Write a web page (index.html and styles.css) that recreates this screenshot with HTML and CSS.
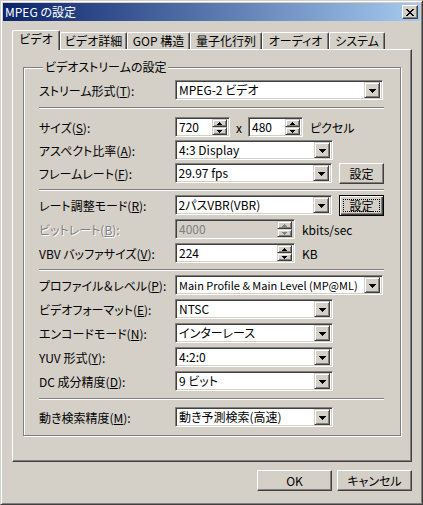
FILE: index.html
```html
<!DOCTYPE html>
<html lang="ja">
<head>
    <meta charset="UTF-8">
    <title>MPEG の設定</title>
    <link rel="stylesheet" href="styles.css">
</head>
<body>
    <svg class="defs" width="0" height="0">
        <symbol id="tri-down" viewBox="0 0 7 4"><path d="M0 0h7v1H0zM1 1h5v1H1zM2 2h3v1H2zM3 3h1v1H3z"/></symbol>
        <symbol id="tri-up-s" viewBox="0 0 5 3"><path d="M2 0h1v1H2zM1 1h3v1H1zM0 2h5v1H0z"/></symbol>
        <symbol id="tri-down-s" viewBox="0 0 5 3"><path d="M0 0h5v1H0zM1 1h3v1H1zM2 2h1v1H2z"/></symbol>
    </svg>

    <div class="window">
        <div class="titlebar">
            <span class="title">MPEG の設定</span>
            <span class="close-btn">
                <svg width="8" height="7" viewBox="0 0 8 7"><path d="M0 0h2v1H0zM6 0h2v1H6zM1 1h2v1H1zM5 1h2v1H5zM2 2h4v1H2zM3 3h2v1H3zM2 4h4v1H2zM1 5h2v1H1zM5 5h2v1H5zM0 6h2v1H0zM6 6h2v1H6z"/></svg>
            </span>
        </div>

        <div class="content">
            <div class="tabs">
                <div class="tab active" style="width:48px">ビデオ</div>
                <div class="tab" style="width:67px">ビデオ詳細</div>
                <div class="tab" style="width:63px">GOP 構造</div>
                <div class="tab" style="width:72px">量子化行列</div>
                <div class="tab" style="width:67px">オーディオ</div>
                <div class="tab" style="width:56px">システム</div>
            </div>

            <div class="panel">
                <fieldset class="group">
                    <legend>ビデオストリームの設定</legend>

                    <div class="section">
                        <div class="row">
                            <span class="label">ストリーム形式(<u>T</u>):</span>
                            <div class="combo wide"><span class="value">MPEG-2 ビデオ</span><span class="drop"><svg width="7" height="4"><use href="#tri-down"/></svg></span></div>
                        </div>
                    </div>

                    <div class="sep first"></div>

                    <div class="section tight">
                        <div class="row">
                            <span class="label">サイズ(<u>S</u>):</span>
                            <div class="edit size"><span class="value">720</span><span class="spin"><span class="half"><svg width="5" height="3"><use href="#tri-up-s"/></svg></span><span class="half"><svg width="5" height="3"><use href="#tri-down-s"/></svg></span></span></div>
                            <span class="times">x</span>
                            <div class="edit size"><span class="value">480</span><span class="spin"><span class="half"><svg width="5" height="3"><use href="#tri-up-s"/></svg></span><span class="half"><svg width="5" height="3"><use href="#tri-down-s"/></svg></span></span></div>
                            <span class="unit">ピクセル</span>
                        </div>
                        <div class="row">
                            <span class="label">アスペクト比率(<u>A</u>):</span>
                            <div class="combo"><span class="value">4:3 Display</span><span class="drop"><svg width="7" height="4"><use href="#tri-down"/></svg></span></div>
                        </div>
                        <div class="row">
                            <span class="label">フレームレート(<u>F</u>):</span>
                            <div class="combo"><span class="value">29.97 fps</span><span class="drop"><svg width="7" height="4"><use href="#tri-down"/></svg></span></div>
                            <button class="btn small">設定</button>
                        </div>
                    </div>

                    <div class="sep"></div>

                    <div class="section">
                        <div class="row">
                            <span class="label">レート調整モード(<u>R</u>):</span>
                            <div class="combo"><span class="value">2パスVBR(VBR)</span><span class="drop"><svg width="7" height="4"><use href="#tri-down"/></svg></span></div>
                            <button class="btn small focused"><span class="focus-rect">設定</span></button>
                        </div>
                        <div class="row">
                            <span class="label disabled">ビットレート(<u>B</u>):</span>
                            <div class="edit long disabled"><span class="value">4000</span><span class="spin"><span class="half"><svg width="5" height="3"><use href="#tri-up-s"/></svg></span><span class="half"><svg width="5" height="3"><use href="#tri-down-s"/></svg></span></span></div>
                            <span class="unit">kbits/sec</span>
                        </div>
                        <div class="row">
                            <span class="label">VBV バッファサイズ(<u>V</u>):</span>
                            <div class="edit long"><span class="value">224</span><span class="spin"><span class="half"><svg width="5" height="3"><use href="#tri-up-s"/></svg></span><span class="half"><svg width="5" height="3"><use href="#tri-down-s"/></svg></span></span></div>
                            <span class="unit">KB</span>
                        </div>
                    </div>

                    <div class="sep"></div>

                    <div class="section">
                        <div class="row">
                            <span class="label">プロファイル＆レベル(<u>P</u>):</span>
                            <div class="combo wide"><span class="value narrow">Main Profile &amp; Main Level (MP@ML)</span><span class="drop"><svg width="7" height="4"><use href="#tri-down"/></svg></span></div>
                        </div>
                        <div class="row">
                            <span class="label">ビデオフォーマット(<u>E</u>):</span>
                            <div class="combo"><span class="value">NTSC</span><span class="drop"><svg width="7" height="4"><use href="#tri-down"/></svg></span></div>
                        </div>
                        <div class="row">
                            <span class="label">エンコードモード(<u>N</u>):</span>
                            <div class="combo"><span class="value">インターレース</span><span class="drop"><svg width="7" height="4"><use href="#tri-down"/></svg></span></div>
                        </div>
                        <div class="row">
                            <span class="label">YUV 形式(<u>Y</u>):</span>
                            <div class="combo"><span class="value">4:2:0</span><span class="drop"><svg width="7" height="4"><use href="#tri-down"/></svg></span></div>
                        </div>
                        <div class="row">
                            <span class="label">DC 成分精度(<u>D</u>):</span>
                            <div class="combo"><span class="value">9 ビット</span><span class="drop"><svg width="7" height="4"><use href="#tri-down"/></svg></span></div>
                        </div>
                    </div>

                    <div class="sep last"></div>

                    <div class="section">
                        <div class="row">
                            <span class="label">動き検索精度(<u>M</u>):</span>
                            <div class="combo"><span class="value">動き予測検索(高速)</span><span class="drop"><svg width="7" height="4"><use href="#tri-down"/></svg></span></div>
                        </div>
                    </div>
                </fieldset>
            </div>

            <div class="dialog-buttons">
                <button class="btn">OK</button>
                <button class="btn">キャンセル</button>
            </div>
        </div>
    </div>
</body>
</html>
```

FILE: styles.css
```css
* {
    box-sizing: border-box;
}

body {
    margin: 0;
    background-color: #d4d0c8;
    font-family: "Noto Sans CJK JP", sans-serif;
    font-feature-settings: "palt";
    font-size: 12px;
    color: #000;
}

.defs {
    position: absolute;
}

u {
    text-decoration-thickness: 1px;
    text-underline-offset: 1px;
}

/* window frame */
.window {
    width: 423px;
    height: 505px;
    padding: 2px;
    border: 1px solid;
    border-color: #d4d0c8 #404040 #404040 #d4d0c8;
    box-shadow: inset 1px 1px #fff, inset -1px -1px #808080;
    background-color: #d4d0c8;
}

.titlebar {
    height: 18px;
    display: flex;
    align-items: center;
    padding: 0 2px 0 2px;
    background: linear-gradient(to right, #0a246a, #a6caf0);
    color: #fff;
}

.title {
    line-height: 18px;
}

.close-btn {
    margin-left: auto;
    width: 16px;
    height: 14px;
    display: flex;
    align-items: center;
    justify-content: center;
    background-color: #d4d0c8;
    border: 1px solid;
    border-color: #fff #404040 #404040 #fff;
    box-shadow: inset -1px -1px #808080;
}

/* tabs */
.content {
    padding: 9px 8px 0 9px;
}

.tabs {
    display: flex;
    align-items: flex-end;
    height: 19px;
    position: relative;
    z-index: 1;
}

.tab {
    height: 17px;
    line-height: 15px;
    text-align: center;
    white-space: nowrap;
    border-top: 1px solid #fff;
    border-left: 1px solid #fff;
    border-right: 1px solid #404040;
    border-radius: 2px 2px 0 0;
    box-shadow: inset -1px 0 #808080;
    background-color: #d4d0c8;
}

.tab.active {
    height: 20px;
    margin-bottom: -1px;
    line-height: 16px;
}

.panel {
    height: 413px;
    padding: 10px 10px 0 10px;
    border: 1px solid;
    border-color: #fff #404040 #404040 #fff;
    box-shadow: inset -1px -1px #808080;
}

/* group box */
.group {
    margin: 0;
    min-width: 0;
    padding: 6px 16px 8px 15px;
    border: 1px solid #808080;
    box-shadow: inset 1px 1px #fff, 1px 1px #fff;
}

.group legend {
    margin-left: 4px;
    padding: 0 2px;
    line-height: 14px;
    background-color: #d4d0c8;
}

.section {
    display: flex;
    flex-direction: column;
    gap: 4px;
}

.section.tight {
    gap: 3px;
}

.sep {
    height: 2px;
    margin: 6px 0 4px;
    border-top: 1px solid #808080;
    border-bottom: 1px solid #fff;
}

.sep.first {
    margin: 7px 0 8px;
}

.sep.last {
    margin: 7px 0 7px;
}

.row {
    display: flex;
    align-items: center;
    height: 20px;
}

.label {
    width: 136px;
    white-space: nowrap;
}

.label.disabled {
    color: #808080;
    text-shadow: 1px 1px #fff;
}

/* sunken fields */
.combo,
.edit {
    display: flex;
    align-items: center;
    height: 20px;
    width: 158px;
    border: 1px solid;
    border-color: #808080 #fff #fff #808080;
    box-shadow: inset 1px 1px #404040, inset -1px -1px #d4d0c8;
    background-color: #fff;
    padding: 2px;
}

.combo.wide {
    width: 208px;
}

.edit.size {
    width: 55px;
}

.edit.long {
    width: 120px;
}

.edit.disabled {
    background-color: #d4d0c8;
    color: #808080;
}

.value {
    flex: 1;
    min-width: 0;
    padding-left: 1px;
    line-height: 16px;
    white-space: nowrap;
}

.value.narrow {
    font-size: 11px;
}

.drop {
    width: 16px;
    height: 16px;
    flex-shrink: 0;
    display: flex;
    align-items: center;
    justify-content: center;
    background-color: #d4d0c8;
    border: 1px solid;
    border-color: #d4d0c8 #404040 #404040 #d4d0c8;
    box-shadow: inset 1px 1px #fff, inset -1px -1px #808080;
}

.drop svg {
    margin-top: 1px;
}

.spin {
    width: 15px;
    height: 16px;
    flex-shrink: 0;
    display: flex;
    flex-direction: column;
}

.half {
    flex: 1;
    display: flex;
    align-items: center;
    justify-content: center;
    background-color: #d4d0c8;
    border: 1px solid;
    border-color: #d4d0c8 #404040 #404040 #d4d0c8;
    box-shadow: inset 1px 1px #fff, inset -1px -1px #808080;
}

.edit.disabled .half svg {
    fill: #808080;
}

.times {
    width: 18px;
    text-align: center;
}

.unit {
    margin-left: 7px;
}

/* push buttons */
.btn {
    font: inherit;
    color: #000;
    padding: 0;
    background-color: #d4d0c8;
    border: 1px solid;
    border-color: #fff #404040 #404040 #fff;
    box-shadow: inset -1px -1px #808080;
}

.btn.small {
    width: 45px;
    height: 21px;
    margin-left: 7px;
    flex-shrink: 0;
}

.btn.focused {
    border: 1px solid #000;
    box-shadow: inset 1px 1px #fff, inset -1px -1px #404040, inset -2px -2px #808080;
    padding: 3px;
}

.focus-rect {
    display: block;
    height: 13px;
    line-height: 11px;
    border: 1px dotted #000;
}

.dialog-buttons {
    display: flex;
    justify-content: flex-end;
    gap: 5px;
    margin-top: 8px;
}

.dialog-buttons .btn {
    width: 75px;
    height: 21px;
}
```
